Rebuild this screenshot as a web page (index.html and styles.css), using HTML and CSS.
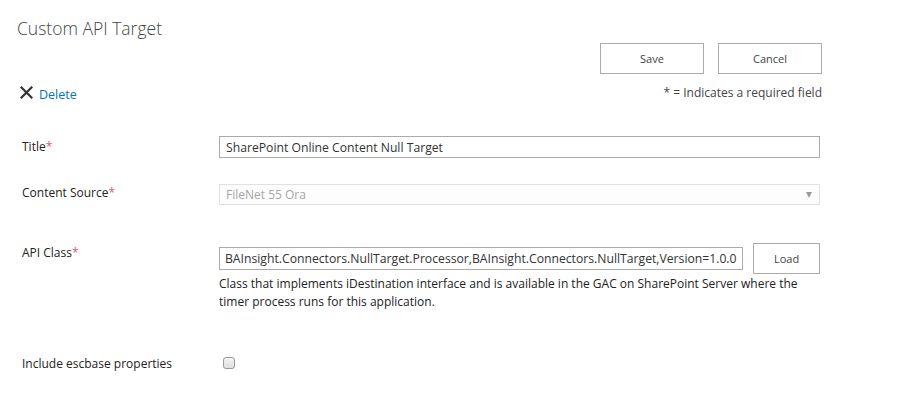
FILE: index.html
```html
<!DOCTYPE html>
<html>
<head>
<meta charset="utf-8">
<link rel="stylesheet" href="styles.css">
</head>
<body>
<div class="page">
  <h1 class="page-title">Custom API Target</h1>
  <div class="toolbar">
    <div class="actions">
      <button class="btn">Save</button>
      <button class="btn">Cancel</button>
    </div>
  </div>
  <div class="subbar">
    <a class="delete" href="#"><svg class="x-icon" width="13" height="13" viewBox="0 0 13 13"><path d="M1.5 1.5 L11.5 11.5 M11.5 1.5 L1.5 11.5" stroke="#333" stroke-width="2.2" stroke-linecap="square"/></svg><span>Delete</span></a>
    <div class="req-note">* = Indicates a required field</div>
  </div>
  <div class="form">
    <div class="row row-title">
      <div class="label">Title<span class="star">*</span></div>
      <div class="field"><input class="text" type="text" value="SharePoint Online Content Null Target"></div>
    </div>
    <div class="row row-source">
      <div class="label">Content Source<span class="star">*</span></div>
      <div class="field"><div class="select"><span>FileNet 55 Ora</span><span class="arrow"></span></div></div>
    </div>
    <div class="row row-api">
      <div class="label">API Class<span class="star">*</span></div>
      <div class="field">
        <div class="api-line">
          <input class="text api" type="text" value="BAInsight.Connectors.NullTarget.Processor,BAInsight.Connectors.NullTarget,Version=1.0.0">
          <button class="btn load">Load</button>
        </div>
        <div class="help">Class that implements iDestination interface and is available in the GAC on SharePoint Server where the timer process runs for this application.</div>
      </div>
    </div>
    <div class="row row-check">
      <div class="label">Include escbase properties</div>
      <div class="field"><span class="checkbox"></span></div>
    </div>
  </div>
</div>
</body>
</html>
```
FILE: styles.css
```css
* { box-sizing: border-box; }
html, body { margin: 0; padding: 0; background: #fff; }
body {
  font-family: "Open Sans", "Noto Sans", sans-serif;
  font-size: 12px;
  color: #333;
}
.page { width: 911px; padding: 0; }
.page-title {
  margin: 0;
  padding: 16px 0 0 17px;
  height: 43px;
  font-size: 17.5px;
  font-weight: 300;
  color: #444;
  line-height: 24px;
}
.toolbar {
  display: flex;
  justify-content: flex-end;
  padding-right: 89px;
}
.actions { display: flex; gap: 14px; }
.btn {
  font-family: inherit;
  font-size: 11px;
  color: #444;
  background: #fff;
  border: 1px solid #ababab;
  width: 104px;
  height: 31px;
  padding: 0;
  margin: 0;
}
.subbar {
  display: flex;
  justify-content: space-between;
  align-items: flex-end;
  padding: 7px 89px 0 20px;
  height: 28px;
}
.delete {
  display: flex;
  align-items: flex-end;
  gap: 6px;
  color: #0072c6;
  text-decoration: none;
  font-size: 12.5px;
  line-height: 15px;
}
.x-icon { margin-bottom: 3px; }
.req-note {
  font-size: 12px;
  color: #444;
  line-height: 15px;
  margin-bottom: 2px;
}
.form { padding: 34px 0 0 22px; }
.row { display: flex; }
.label {
  width: 197px;
  flex: none;
  font-size: 12px;
  color: #222;
  line-height: 16px;
}
.star { color: #e05a5a; }
.field { width: 601px; }
.text {
  display: block;
  width: 601px;
  height: 22px;
  border: 1px solid #ababab;
  padding: 0 6px;
  margin: 0;
  font-family: inherit;
  font-size: 12.2px;
  color: #333;
  outline: none;
}
.row-title .label { padding-top: 3px; }
.row-source { margin-top: 26px; }
.row-source .label { padding-top: 1px; }
.select {
  display: flex;
  justify-content: space-between;
  align-items: center;
  width: 601px;
  height: 21px;
  border: 1px solid #e1e1e1;
  background: #fdfdfd;
  padding: 0 7px 0 6px;
  color: #a6a6a6;
  font-size: 12px;
}
.arrow {
  width: 0; height: 0;
  border-left: 3.5px solid transparent;
  border-right: 3.5px solid transparent;
  border-top: 6px solid #9a9a9a;
}
.row-api { margin-top: 40px; }
.api-line { display: flex; align-items: flex-start; gap: 10px; margin-top: -2px; }
.text.api { width: 525px; height: 23px; padding: 0 5px; margin-top: 4px; }
.btn.load { width: 67px; height: 31px; }
.help {
  font-size: 12px;
  color: #222;
  line-height: 18px;
  margin-top: 1px;
  width: 600px;
}
.row-check { margin-top: 45px; }
.row-check .label { line-height: 16px; }
.checkbox {
  display: block;
  margin: 1px 0 0 4px;
  width: 12px;
  height: 12px;
  border: 1px solid #999;
  border-radius: 3px;
  background: linear-gradient(#f4f4f4, #dedede);
}
```
